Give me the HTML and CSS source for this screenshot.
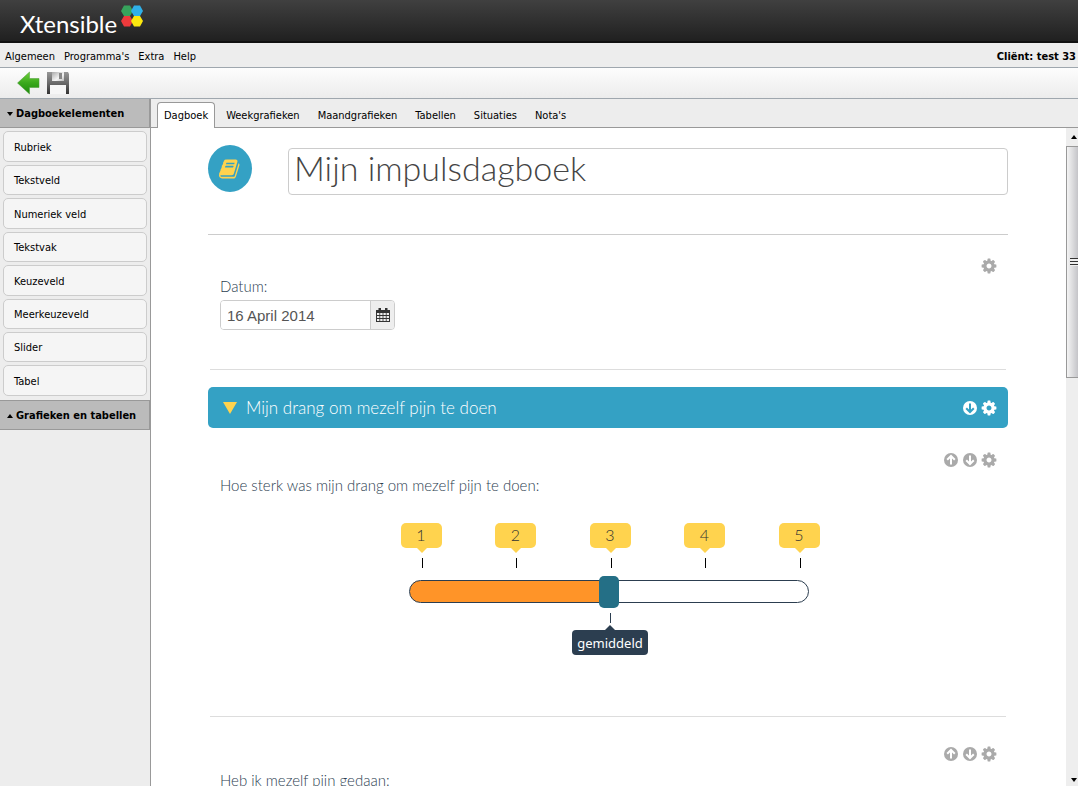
FILE: index.html
```
<!DOCTYPE html>
<html lang="nl">
<head>
<meta charset="utf-8">
<meta name="viewport" content="width=device-width, initial-scale=1">
<title>Xtensible - Dagboek</title>
<link rel="stylesheet" href="styles.css">
</head>
<body class="app">
<svg class="sprite" aria-hidden="true">
  <symbol id="cog" viewBox="64 64 1664 1664"><path d="M1152 896q0-106-75-181t-181-75-181 75-75 181 75 181 181 75 181-75 75-181zm512-109v222q0 12-8 23t-20 13l-185 28q-19 54-39 91 35 50 107 138 10 12 10 25t-9 23q-27 37-99 108t-94 71q-12 0-26-9l-138-108q-44 23-91 38-16 136-29 186-7 28-36 28h-222q-14 0-24.5-8.5t-11.5-21.5l-28-184q-49-16-90-37l-141 107q-10 9-25 9-14 0-25-11-126-114-165-168-7-10-7-23 0-12 8-23 15-21 51-66.5t54-70.5q-27-50-41-99l-183-27q-13-2-21-12.5t-8-23.5v-222q0-12 8-23t19-13l186-28q14-46 39-92-40-57-107-138-10-12-10-24 0-10 9-23 26-36 98.5-107.5t94.5-71.5q13 0 26 10l138 107q44-23 91-38 16-136 29-186 7-28 36-28h222q14 0 24.5 8.5t11.5 21.5l28 184q49 16 90 37l142-107q9-9 24-9 13 0 25 10 129 119 165 170 7 8 7 22 0 12-8 23-15 21-51 66.5t-54 70.5q26 50 41 98l183 28q13 2 21 12.5t8 23.5z"/></symbol>
  <symbol id="down" viewBox="0 0 16 16"><circle cx="8" cy="8" r="7"/><path class="cut" d="M8 3.6v8M4.2 8.2 8 12l3.800-3.800"/></symbol>
  <symbol id="up" viewBox="0 0 16 16"><circle cx="8" cy="8" r="7"/><path class="cut" d="M8 12.400v-8M4.200 7.800 8 4l3.800 3.800"/></symbol>
</svg>

<header class="brand">
  <span class="brand-name">Xtensible</span>
  <svg class="brand-mark" viewBox="0 0 24 24" aria-hidden="true">
    <path fill="#37a35c" d="M4 1.500h6l3 5.500-3 5H4L1 7z"/>
    <path fill="#2fb0e8" d="M14 1.500h6l3 5.500-3 5h-6l-3-5z"/>
    <path fill="#ee3a3c" d="M4 12h6l3 5-3 5.500H4L1 17z"/>
    <path fill="#fbe80f" d="M14 12h6l3 5-3 5.500h-6L11 17z"/>
  </svg>
</header>

<nav class="menu">
  <a href="#">Algemeen</a><a href="#">Programma's</a><a href="#">Extra</a><a href="#">Help</a>
  <strong class="client">Cliënt: test 33</strong>
</nav>

<div class="toolbar">
  <button class="tool" aria-label="Terug">
    <svg viewBox="0 0 24 24"><defs><linearGradient id="g" x2="0" y2="1"><stop offset="0" stop-color="#6fd03c"/><stop offset=".5" stop-color="#3aa81c"/><stop offset="1" stop-color="#1c8a0c"/></linearGradient></defs><path fill="url(#g)" stroke="#4a9a35" stroke-width=".5" d="M1.500 12 13.500 1v6.500H23v9H13.500V23z"/></svg>
  </button>
  <button class="tool" aria-label="Opslaan">
    <svg viewBox="0 0 24 24"><defs><linearGradient id="s" x2="0" y2="1"><stop offset="0" stop-color="#989898"/><stop offset=".5" stop-color="#6a6a6a"/><stop offset="1" stop-color="#333"/></linearGradient><linearGradient id="t" x2="1" y2="1"><stop offset="0" stop-color="#aaa"/><stop offset=".6" stop-color="#f4f4f4"/><stop offset="1" stop-color="#bbb"/></linearGradient></defs><path fill="url(#s)" d="M1 1h21l1 2v20H1z"/><path fill="url(#t)" d="M6 1h12v9H6z"/><path fill="#888" d="M13 2h3v6h-3z"/><path fill="#f6f6f6" d="M4 14h16v9H4z"/></svg>
  </button>
</div>

<div class="workspace">
  <aside class="sidebar">
    <button class="group"><span class="caret caret-down"></span>Dagboekelementen</button>
    <div class="elements">
      <button class="element">Rubriek</button>
      <button class="element">Tekstveld</button>
      <button class="element">Numeriek veld</button>
      <button class="element">Tekstvak</button>
      <button class="element">Keuzeveld</button>
      <button class="element">Meerkeuzeveld</button>
      <button class="element">Slider</button>
      <button class="element">Tabel</button>
    </div>
    <button class="group"><span class="caret caret-up"></span>Grafieken en tabellen</button>
  </aside>

  <div class="editor">
    <nav class="tabs">
      <a class="tab tab-active" href="#">Dagboek</a>
      <a class="tab" href="#">Weekgrafieken</a>
      <a class="tab" href="#">Maandgrafieken</a>
      <a class="tab" href="#">Tabellen</a>
      <a class="tab" href="#">Situaties</a>
      <a class="tab" href="#">Nota's</a>
    </nav>
    <div class="view">
      <main class="page">
        <div class="form">
          <div class="title-row">
            <span class="badge"><svg viewBox="0 0 1792 1792" aria-hidden="true"><path d="M1639 478q40 57 18 129l-275 906q-19 64-76.5 107.5t-122.5 43.5h-923q-77 0-148.5-53.5t-99.5-131.5q-24-67-2-127 0-4 3-27t4-37q1-8-3-21.5t-3-19.5q2-11 8-21t16.5-23.5 16.5-23.5q23-38 45-91.5t30-91.5q3-10 .5-30t-.5-28q3-11 17-28t17-23q21-36 42-92t25-90q1-9-2.5-32t.5-28q4-13 22-30.5t22-22.500q19-26 42.500-84.500t27.500-96.500q1-8-3-25.500t-2-26.500q2-8 9-18t18-23 17-21q8-12 16.500-30.500t15-35 16-36 19.500-32 26.500-23.500 36-11.500 47.500 5.500l-1 3q38-9 51-9h761q74 0 114 56t18 130l-274 906q-36 119-71.500 153.500t-128.500 34.500h-869q-27 0-38 15-11 16-1 43 24 70 144 70h923q29 0 56-15.500t35-41.500l300-987q7-22 5-57 38 15 59 43zm-1064 2q-4 13 2 22.500t20 9.500h608q13 0 25.500-9.500t16.500-22.500l21-64q4-13-2-22.500t-20-9.500h-608q-13 0-25.500 9.500t-16.500 22.500zm-83 256q-4 13 2 22.500t20 9.500h608q13 0 25.500-9.500t16.500-22.500l21-64q4-13-2-22.500t-20-9.500h-608q-13 0-25.500 9.500t-16.500 22.500z"/></svg></span>
            <input class="title" type="text" aria-label="Titel" value="Mijn impulsdagboek">
          </div>

          <section class="block block-date">
            <div class="actions">
              <button class="icon" aria-label="Instellingen"><svg><use href="#cog"/></svg></button>
            </div>
            <label class="question" for="date">Datum:</label>
            <div class="date">
              <input class="date-text" id="date" type="text" value="16 April 2014">
              <button class="date-pick" aria-label="Kies datum">
                <svg viewBox="0 0 14 14"><path fill="#333" d="M0 2h14v12H0z"/><path fill="#333" d="M2.500 0h2.500v3H2.500zM9 0h2.500v3H9z"/><path fill="#eee" d="M1 5h2.400v2H1zM4.200 5h2.400v2H4.200zM7.400 5h2.400v2H7.400zM10.600 5H13v2h-2.400zM1 8h2.400v2H1zM4.200 8h2.400v2H4.200zM7.400 8h2.400v2H7.400zM10.600 8H13v2h-2.400zM1 11h2.400v2H1zM4.200 11h2.400v2H4.200zM7.400 11h2.400v2H7.400zM10.600 11H13v2h-2.400z"/></svg>
              </button>
            </div>
          </section>

          <div class="section-bar">
            <span class="fold"></span>
            <h2 class="section-title">Mijn drang om mezelf pijn te doen</h2>
            <button class="icon" aria-label="Omlaag"><svg><use href="#down"/></svg></button>
            <button class="icon" aria-label="Instellingen"><svg><use href="#cog"/></svg></button>
          </div>

          <section class="block block-slider">
            <div class="actions">
              <button class="icon" aria-label="Omhoog"><svg><use href="#up"/></svg></button>
              <button class="icon" aria-label="Omlaag"><svg><use href="#down"/></svg></button>
              <button class="icon" aria-label="Instellingen"><svg><use href="#cog"/></svg></button>
            </div>
            <label class="question" for="strength">Hoe sterk was mijn drang om mezelf pijn te doen:</label>
            <div class="scale">
              <div class="marks">
                <span class="mark">1</span><span class="mark">2</span><span class="mark">3</span><span class="mark">4</span><span class="mark">5</span>
              </div>
              <input class="range" id="strength" type="range" min="1" max="5" value="3">
              <output class="tip" for="strength">gemiddeld</output>
            </div>
          </section>

          <section class="block block-next">
            <div class="actions">
              <button class="icon" aria-label="Omhoog"><svg><use href="#up"/></svg></button>
              <button class="icon" aria-label="Omlaag"><svg><use href="#down"/></svg></button>
              <button class="icon" aria-label="Instellingen"><svg><use href="#cog"/></svg></button>
            </div>
            <p class="question">Heb ik mezelf pijn gedaan:</p>
          </section>
        </div>
      </main>
      <div class="scroll" aria-hidden="true">
        <span class="scroll-step"><span class="caret caret-up"></span></span>
        <span class="scroll-thumb"><span class="grip"></span></span>
        <span class="scroll-step scroll-end"><span class="caret caret-down"></span></span>
      </div>
    </div>
  </div>
</div>
</body>
</html>
```
FILE: styles.css
```
* { box-sizing: border-box; }
.app {
  margin: 0;
  height: 100vh;
  display: flex;
  flex-direction: column;
  overflow: hidden;
  background: #ededed;
  color: #000;
  font: 11px/14px "DejaVu Sans Condensed", "Noto Sans", sans-serif;
}
button, input { font: inherit; color: inherit; margin: 0; }
button { border: 0; background: none; padding: 0; cursor: pointer; }
a { color: inherit; text-decoration: none; }
.sprite { position: absolute; width: 0; height: 0; }

.brand {
  flex: none;
  display: flex;
  height: 43px;
  padding-left: 20px;
  background: linear-gradient(#404040, #202020);
  border-bottom: 2px solid #111;
}
.brand-name {
  padding-top: 9px;
  color: #fff;
  font: 24px/30px Lato, sans-serif;
}
.brand-mark { width: 24px; height: 24px; margin: 4px 0 0 3px; }

.menu {
  flex: none;
  display: flex;
  align-items: center;
  gap: 9px;
  height: 25px;
  padding: 4px 2px 0 5px;
  border-bottom: 1px solid #9fa7ae;
}
.client { margin-left: auto; }

.toolbar {
  flex: none;
  display: flex;
  align-items: center;
  gap: 6px;
  height: 31px;
  padding-left: 16px;
  background: linear-gradient(#fdfdfd, #ececec);
  border-bottom: 1px solid #9fa7ae;
}
.tool, .tool svg { display: block; width: 24px; height: 24px; }

.workspace { flex: 1; min-height: 0; display: flex; }
.sidebar { flex: none; width: 151px; border-right: 1px solid #999; }
.group {
  display: flex;
  align-items: center;
  gap: 3px;
  width: 100%;
  height: 30px;
  padding: 2px 0 0 7px;
  background: #bbb;
  border: 1px solid #999;
  border-width: 1px 1px 1px 0;
  font-weight: bold;
}
.group:first-child { height: 29px; border-top: 0; }
.caret { border: 3px solid transparent; }
.caret-down { border-top: 4px solid #000; border-bottom: 0; }
.caret-up { border-bottom: 4px solid #000; border-top: 0; }
.elements { display: flex; flex-direction: column; gap: 3px; padding: 3px 3px 4px; }
.element {
  height: 31px;
  padding: 2px 10px 0;
  text-align: left;
  background: #f5f5f5;
  border: 1px solid #ccc;
  border-radius: 5px;
}
.element:nth-child(2), .element:nth-child(4), .element:nth-child(6), .element:nth-child(7) { height: 30px; }

.editor { flex: 1; min-width: 0; display: flex; flex-direction: column; }
.tabs {
  flex: none;
  display: flex;
  align-items: flex-end;
  gap: 4px;
  height: 29px;
  padding-left: 6px;
  border-bottom: 1px solid #999;
}
.tab {
  height: 26px;
  margin-bottom: -1px;
  padding: 6px 6px 0;
  border: 1px solid transparent;
  border-bottom: 0;
  border-radius: 4px 4px 0 0;
}
.tab-active { background: #fff; border-color: #999; }

.view { flex: 1; min-height: 0; display: flex; background: #fff; }
.page { flex: 1; min-width: 0; padding-right: 1px; overflow: hidden; }
.form {
  max-width: 800px;
  margin: 0 auto;
  color: #2c3e50;
  font: 15px/20px Lato, sans-serif;
  font-weight: 300;
}
.title-row {
  display: flex;
  align-items: flex-start;
  gap: 36px;
  height: 107px;
  padding-top: 17px;
  border-bottom: 1px solid #ccc;
}
.badge {
  flex: none;
  display: grid;
  place-items: center;
  width: 44px;
  height: 47px;
  border-radius: 50%;
  background: #34a1c4;
}
.badge svg { width: 22px; fill: #ffd34e; }
.title {
  flex: 1;
  min-width: 0;
  height: 47px;
  margin-top: 3px;
  padding: 0 6px 8px 5px;
  color: #444;
  font-size: 34px;
  background: #fff;
  border: 1px solid #ccc;
  border-radius: 4px;
}
.block {
  margin: 0 2px;
  padding: 0 9px 0 10px;
  border-bottom: 1px solid #ddd;
}
.actions {
  display: flex;
  justify-content: flex-end;
  gap: 3px;
  height: 16px;
}
.icon, .icon svg { display: block; width: 16px; height: 16px; }
.icon { color: #aaa; --cut: #fff; }
.icon svg { fill: currentColor; }
.cut { fill: none; stroke: var(--cut); stroke-width: 2; }
.question { display: block; margin: 0; }

.block-date { height: 135px; padding-top: 23px; }
.block-date .question { margin: 2px 0 4px; }
.date {
  display: flex;
  width: 175px;
  height: 30px;
  border: 1px solid #ccc;
  border-radius: 4px;
  overflow: hidden;
}
.date-text {
  flex: 1;
  min-width: 0;
  padding: 2px 6px 0;
  border: 0;
  color: #555;
  font: 15px/20px "Liberation Sans", sans-serif;
}
.date-pick {
  display: grid;
  place-items: center;
  width: 24px;
  background: #eee;
  border-left: 1px solid #ccc;
}
.date-pick svg { width: 14px; height: 14px; }

.section-bar {
  display: flex;
  align-items: center;
  gap: 3px;
  height: 41px;
  margin-top: 17px;
  padding: 0 11px 0 15px;
  background: #34a1c4;
  border-radius: 5px;
}
.section-bar .icon { color: #fff; --cut: #34a1c4; }
.fold {
  margin-right: 6px;
  border: 7px solid transparent;
  border-top: 12px solid #ffd34e;
  border-bottom: 0;
}
.section-title {
  flex: 1;
  margin: 0;
  color: #fff;
  font-size: 17px;
  font-weight: 300;
}

.block-slider { height: 289px; padding-top: 24px; }
.block-slider .question { margin-top: 7px; }
.scale {
  display: flex;
  flex-direction: column;
  width: 422px;
  max-width: 100%;
  margin: 28px auto 0;
  padding-left: 3px;
}
.marks { display: flex; justify-content: space-between; }
.mark {
  position: relative;
  width: 41px;
  height: 25px;
  margin-bottom: 27px;
  color: #333;
  font-size: 16px;
  line-height: 24px;
  text-align: center;
  background: #ffd34e;
  border-radius: 5px;
}
.mark::before {
  content: "";
  position: absolute;
  top: 25px;
  left: 16px;
  border: 5px solid transparent;
  border-top-color: #ffd34e;
  border-bottom: 0;
}
.mark::after {
  content: "";
  position: absolute;
  top: 35px;
  left: 21px;
  width: 1px;
  height: 10px;
  background: #000;
}
.range {
  -webkit-appearance: none;
  appearance: none;
  height: 32px;
  margin: 0 11px 0 8px;
  background: none;
}
.range::-webkit-slider-runnable-track {
  height: 23px;
  border: 1px solid #2c3e50;
  border-radius: 12px;
  background: linear-gradient(90deg, #ff9428 50%, #fff 50%);
}
.range::-webkit-slider-thumb {
  -webkit-appearance: none;
  width: 20px;
  height: 32px;
  margin-top: -5px;
  border-radius: 5px;
  background: #246f86;
}
.tip {
  position: relative;
  align-self: center;
  margin-top: 23px;
  padding: 0 5px;
  height: 25px;
  color: #fff;
  font: 13px/26px "Noto Sans", sans-serif;
  background: #2c3e50;
  border-radius: 4px;
}
.tip::before {
  content: "";
  position: absolute;
  top: -5px;
  left: calc(50% - 5px);
  border: 5px solid transparent;
  border-bottom-color: #2c3e50;
  border-top: 0;
}
.tip::after {
  content: "";
  position: absolute;
  top: -17px;
  left: 50%;
  width: 1px;
  height: 10px;
  background: #2c3e50;
}
.block-next { padding-top: 29px; border: 0; }
.block-next .question { margin-top: 8px; }

.scroll {
  flex: none;
  display: flex;
  flex-direction: column;
  width: 12px;
  background: #eee;
}
.scroll-step { display: flex; height: 18px; padding: 7px 0 0 5px; }
.scroll-step .caret { height: 4px; }
.scroll-end { margin-top: auto; height: 15px; }
.scroll-thumb {
  display: grid;
  place-items: center end;
  height: 232px;
  border: 1px solid #999;
  border-right: 0;
  background: linear-gradient(90deg, #f4f4f4, #c4c4c8);
}
.grip {
  width: 8px;
  height: 8px;
  background: repeating-linear-gradient(#333 0 1px, #eee 1px 3px);
}
```
